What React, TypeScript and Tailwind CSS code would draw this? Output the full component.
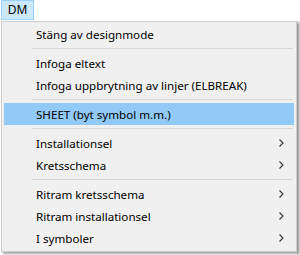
import React from 'react';

type Entry = { label: string; sub?: boolean; active?: boolean } | 'sep';

const entries: Entry[] = [
  { label: 'Stäng av designmode' },
  'sep',
  { label: 'Infoga eltext' },
  { label: 'Infoga uppbrytning av linjer (ELBREAK)' },
  'sep',
  { label: 'SHEET (byt symbol m.m.)', active: true },
  'sep',
  { label: 'Installationsel', sub: true },
  { label: 'Kretsschema', sub: true },
  'sep',
  { label: 'Ritram kretsschema', sub: true },
  { label: 'Ritram installationsel', sub: true },
  { label: 'I symboler', sub: true },
];

const Chevron = () => (
  <svg width="5" height="8" viewBox="0 0 5 8" className="absolute left-[275px] top-[7px]">
    <path d="M0.5 0.5 L4 4 L0.5 7.5" fill="none" stroke="#333" strokeWidth="1.1" />
  </svg>
);

export default function App() {
  return (
    <div className="w-[300px] h-[255px] bg-white overflow-hidden relative font-['Noto_Sans',sans-serif] text-[11.6px] text-black">
      <div className="h-[21px] flex items-start">
        <div className="ml-[1px] w-[33px] h-[20px] bg-[#cce8ff] border border-[#99d1ff] flex items-center justify-center leading-none text-[12px]">
          DM
        </div>
      </div>
      <div className="absolute right-0 top-[21px] w-[3px] h-[234px] bg-[#e6e6e6]" />
      <div className="relative ml-[1px] w-[296px] bg-[#f0f0f0] border border-[#cccccc] pt-[1px] pb-[2px] px-[2px] shadow-[2px_2px_2px_rgba(0,0,0,0.35)]">
        {entries.map((e, i) =>
          e === 'sep' ? (
            <div key={i} className="h-[7px] flex items-center">
              <div className="ml-[28px] w-[261px] h-[1px] bg-[#d7d7d7]" />
            </div>
          ) : (
            <div
              key={i}
              className={`relative h-[22px] flex items-center pl-[32px] pt-[1px] leading-none ${e.active ? 'bg-[#91c9f7]' : ''}`}
            >
              {e.label}
              {e.sub && <Chevron />}
            </div>
          )
        )}
      </div>
    </div>
  );
}
